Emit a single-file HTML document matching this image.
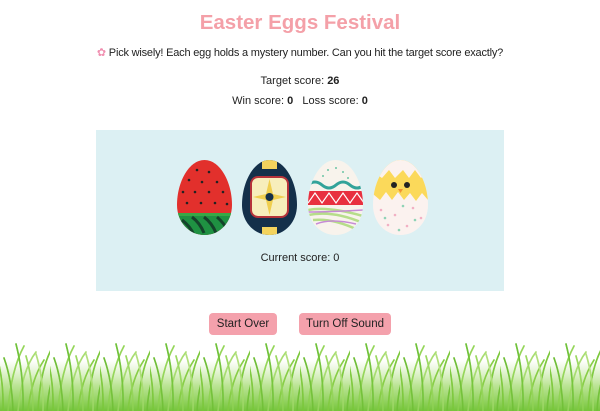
<!DOCTYPE html>
<html><head><meta charset="utf-8"><style>
body{margin:0;width:600px;height:411px;overflow:hidden;background:#fff;font-family:"Liberation Sans",sans-serif;color:#222;position:relative}
.t{position:absolute;left:0;width:600px;text-align:center}
h1{margin:0;position:absolute;top:11px;left:0;width:600px;text-align:center;color:#f4a0a8;font-size:20.5px;font-weight:bold}
.box{position:absolute;left:96px;top:130px;width:408px;height:161px;background:#dcf0f3}
.btn{position:absolute;top:313px;height:22px;background:#f4a1ac;border-radius:4px;font-size:11.5px;line-height:22px;text-align:center;color:#222}
</style></head><body>
<h1>Easter Eggs Festival</h1>
<div class="t" style="top:46px;font-size:11px;letter-spacing:-0.2px"><span style="color:#f08fb0">✿</span> Pick wisely! Each egg holds a mystery number. Can you hit the target score exactly?</div>
<div class="t" style="top:75px;font-size:11px">Target score: <b>26</b></div>
<div class="t" style="top:95px;font-size:11px">Win score: <b>0</b> &nbsp; Loss score: <b>0</b></div>
<div class="box"></div>
<svg style="position:absolute;left:0;top:0" width="600" height="300">
<defs><clipPath id="e"><path d="M27.5 0C12 0 0 22 0 45C0 62 12 75 27.5 75C43 75 55 62 55 45C55 22 43 0 27.5 0Z"/></clipPath></defs>
<g transform="translate(177,160)" clip-path="url(#e)">
<rect width="55" height="75" fill="#e2302c"/><rect y="53" width="55" height="22" fill="#1f9142"/>
<rect y="53" width="55" height="3" fill="#37a846"/>
<path d="M5 60q8 6 12 15M15 57q8 6 12 16M27 57q8 6 12 16M40 57q7 6 11 14" stroke="#14432a" stroke-width="3" fill="none"/>
<g fill="#222"><circle cx="20" cy="10" r="1.3"/><circle cx="32" cy="12" r="1.3"/><circle cx="12" cy="20" r="1.3"/><circle cx="25" cy="22" r="1.3"/><circle cx="40" cy="22" r="1.3"/><circle cx="6" cy="32" r="1.3"/><circle cx="18" cy="32" r="1.3"/><circle cx="32" cy="32" r="1.3"/><circle cx="46" cy="32" r="1.3"/><circle cx="10" cy="43" r="1.3"/><circle cx="24" cy="43" r="1.3"/><circle cx="38" cy="43" r="1.3"/><circle cx="50" cy="44" r="1.3"/></g></g>
<g transform="translate(242,160)" clip-path="url(#e)">
<rect width="55" height="75" fill="#14304a"/><rect x="20" y="0" width="15" height="9" fill="#f3d35d"/><rect x="20" y="67" width="15" height="9" fill="#f3d35d"/>
<rect x="9" y="17" width="37" height="40" rx="7" fill="#f7eebb" stroke="#b5333a" stroke-width="2"/>
<path d="M27.5 19L31 34L44 37L31 40L27.5 55L24 40L11 37L24 34Z" fill="#f0cf4f"/>
<circle cx="27.5" cy="37" r="4" fill="#14304a"/></g>
<g transform="translate(308,160)" clip-path="url(#e)">
<rect width="55" height="75" fill="#f8f3ec"/>
<path d="M0 25q7-6 14 0t14 0t14 0t14 0" stroke="#33a39a" stroke-width="3" fill="none"/>
<rect y="31" width="55" height="14" fill="#e8303f"/>
<path d="M0 43l7-10l7 10l7-10l7 10l7-10l7 10l7-10l7 10" stroke="#fff" stroke-width="1.2" fill="none"/>
<path d="M0 50q20-4 55 6M0 55q25-5 55 8M5 60q20-2 45 10" stroke="#b6dd8a" stroke-width="2.5" fill="none"/>
<path d="M0 52q20 0 55 -2M8 64q15 -6 40 0" stroke="#c68bd6" stroke-width="1.5" fill="none"/>
<g fill="#6cc5a6"><circle cx="20" cy="10" r="1"/><circle cx="28" cy="8" r="1"/><circle cx="35" cy="12" r="1"/><circle cx="15" cy="16" r="1"/><circle cx="40" cy="18" r="1"/></g></g>
<g transform="translate(373,160)" clip-path="url(#e)">
<rect width="55" height="75" fill="#fbf2ef"/>
<path d="M0 0H55V40L49 33L43 41L37 33L31 40L25 32L19 40L13 32L7 40L0 34Z" fill="#fbd95a"/>
<path d="M0 0H55V12L48 18L42 10L36 18L30 10L22 18L16 10L9 18L0 12Z" fill="#fbf2ef"/>
<circle cx="21" cy="25" r="3" fill="#222"/><circle cx="34" cy="25" r="3" fill="#222"/><path d="M25 29h5l-2.5 4z" fill="#f29233"/>
<g fill="#f2b0c4"><circle cx="8" cy="50" r="1.3"/><circle cx="22" cy="55" r="1.3"/><circle cx="40" cy="48" r="1.3"/><circle cx="15" cy="65" r="1.3"/><circle cx="34" cy="66" r="1.3"/><circle cx="48" cy="58" r="1.3"/></g>
<g fill="#8fd3b6"><circle cx="30" cy="46" r="1.3"/><circle cx="12" cy="58" r="1.3"/><circle cx="42" cy="60" r="1.3"/><circle cx="26" cy="70" r="1.3"/></g></g>
</svg>
<div class="t" style="top:252px;font-size:11px">Current score: 0</div>
<div class="btn" style="left:209px;width:68px">Start Over</div>
<div class="btn" style="left:299px;width:92px">Turn Off Sound</div>
<svg style="position:absolute;left:0;top:340px" width="600" height="71">
<defs>
<linearGradient id="lg" x1="0" y1="0" x2="0" y2="1"><stop offset="0" stop-color="#a6db6c" stop-opacity="0"/><stop offset="0.5" stop-color="#8ed24f" stop-opacity="0.6"/><stop offset="1" stop-color="#74c43a"/></linearGradient>
<pattern id="g" width="50" height="71" patternUnits="userSpaceOnUse">
<g stroke-linecap="round" fill="none" stroke-width="1.6">
<path d="M3 71Q4 35 -6 8" stroke="#7cc83c"/><path d="M8 71Q11 30 24 6" stroke="#95d65a"/><path d="M13 71Q12 40 4 18" stroke="#6dbd35"/><path d="M18 71Q22 30 36 12" stroke="#a9de72"/><path d="M23 71Q24 35 16 4" stroke="#70c23a"/><path d="M28 71Q31 40 44 20" stroke="#86cd44"/><path d="M33 71Q33 40 26 16" stroke="#9bd862"/><path d="M38 71Q40 30 52 8" stroke="#7cc83c"/><path d="M43 71Q44 40 36 14" stroke="#b2e07e"/><path d="M47 71Q49 38 60 24" stroke="#6dbd35"/>
</g></pattern></defs>
<rect width="600" height="71" fill="url(#g)"/>
<rect x="0" y="20" width="600" height="51" fill="url(#lg)"/>
<rect width="600" height="71" fill="url(#g)" opacity="0.6"/>
</svg>
</body></html>
